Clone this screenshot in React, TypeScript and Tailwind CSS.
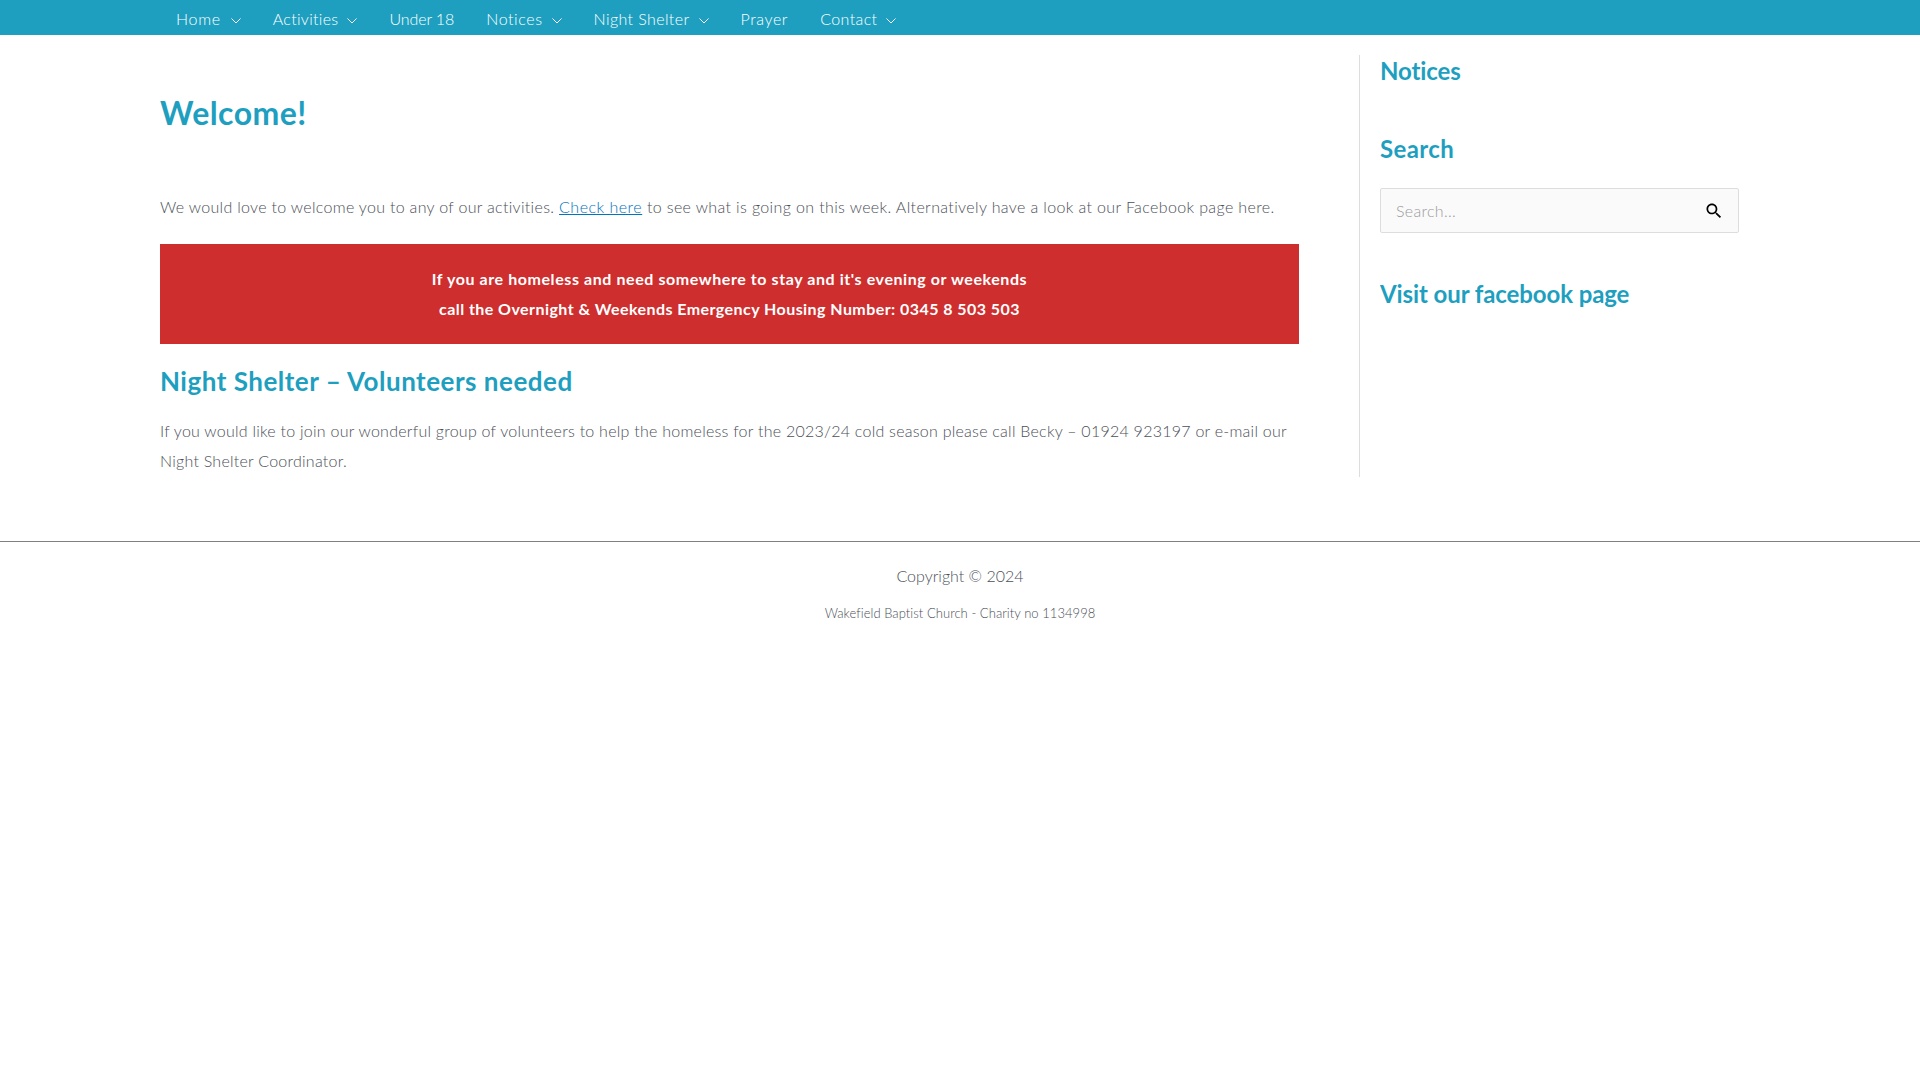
const navItems = [
  { label: "Home", caret: true, style: "gap-[10px] tracking-[0.7px]" },
  { label: "Activities", caret: true, style: "gap-[9px] tracking-[0.3px]" },
  { label: "Under 18", caret: false, style: "tracking-[-0.1px]" },
  { label: "Notices", caret: true, style: "gap-[9px] tracking-[0.6px]" },
  { label: "Night Shelter", caret: true, style: "gap-[9px] tracking-[0.4px]" },
  { label: "Prayer", caret: false, style: "tracking-[0.6px]" },
  { label: "Contact", caret: true, style: "gap-[9px] tracking-[0.4px]" },
];

export default function App() {
  return (
    <div className="min-h-[1080px] bg-white font-['Lato',sans-serif] text-[16px] font-light text-[#4b4f58]">
      {/* Nav */}
      <nav className="flex h-[35px] items-start bg-[#1e9fbf] pl-[160px] text-white">
        {navItems.map((item) => (
          <a key={item.label} className={`flex h-[38px] items-center px-4 ${item.style}`}>
            {item.label}
            {item.caret && (
              <svg width="10" height="6" viewBox="0 0 10 6" fill="none" stroke="currentColor" className="mt-[3px]">
                <path d="M.5.5 5 5l4.5-4.5" />
              </svg>
            )}
          </a>
        ))}
      </nav>

      {/* Main */}
      <div className="flex pl-[160px] pt-5">
        <main className="w-[1139px]">
          <h1 className="mt-[38px] text-[32px] leading-[40px] font-bold tracking-[0.45px] text-[#1e9fbf]">Welcome!</h1>
          <p className="mt-[59px] leading-[30px] tracking-[0.37px]">
            <span className="tracking-[0.31px]">We would love to welcome you to any of our activities.</span>{" "}
            <a className="tracking-[0.5px] text-[#0274be] underline">Check here</a> to see what is going on this week.
            Alternatively have a look at our Facebook page here.
          </p>
          <div className="mt-[22px] flex h-[100px] flex-col items-center justify-center bg-[#cf2e2e] leading-[30px] font-bold text-white">
            <p className="tracking-[0.58px]">
              If you are homeless and need somewhere to stay and it's evening or weekends
            </p>
            <p className="tracking-[0.44px]">
              call the Overnight &amp; Weekends Emergency Housing Number: 0345 8 503 503
            </p>
          </div>
          <h2 className="mt-[21px] text-[26px] leading-[32px] font-bold tracking-[0.5px] text-[#1e9fbf]">
            Night Shelter – Volunteers needed
          </h2>
          <p className="mt-[19px] leading-[30px] tracking-[0.25px]">
            If you would like to join our wonderful group of volunteers to help the homeless for the 2023/24 cold season
            please call Becky – 01924 923197 or e-mail our Night Shelter Coordinator.
          </p>
        </main>

        <aside className="ml-[60px] h-[422px] w-[380px] border-l border-[#dddddd] pl-5">
          <h2 className="mt-px text-[24px] leading-[30px] font-bold tracking-[-0.1px] text-[#1e9fbf]">Notices</h2>
          <h2 className="mt-[48px] text-[24px] leading-[30px] font-bold tracking-[0.4px] text-[#1e9fbf]">Search</h2>
          <div className="mt-[24px] flex h-[45px] w-[359px] items-center justify-between rounded-[2px] border border-[#dddddd] bg-[#fafafa] pl-[15px] pr-[14px]">
            <span className="tracking-[0.3px] text-[#9a9a9a]">Search...</span>
            <svg width="20" height="20" viewBox="0 0 24 24" fill="#000000">
              <path d="M15.5 14h-.79l-.28-.27C15.41 12.59 16 11.11 16 9.5 16 5.91 13.09 3 9.5 3S3 5.91 3 9.5 5.91 16 9.5 16c1.61 0 3.09-.59 4.23-1.57l.27.28v.79l5 4.99L20.49 19l-4.99-5zm-6 0C7.01 14 5 11.99 5 9.5S7.01 5 9.5 5 14 7.01 14 9.5 11.99 14 9.5 14z" />
            </svg>
          </div>
          <h2 className="mt-[46px] text-[24px] leading-[30px] font-bold tracking-[-0.1px] text-[#1e9fbf]">
            Visit our facebook page
          </h2>
        </aside>
      </div>

      {/* Footer */}
      <footer className="mt-[64px] border-t border-[#808080] pt-[19px] text-center">
        <p className="leading-[30px]">Copyright © 2024</p>
        <p className="mt-[12px] text-[13px] leading-[20px] tracking-[0.05px]">
          Wakefield Baptist Church - Charity no 1134998
        </p>
      </footer>
    </div>
  );
}
